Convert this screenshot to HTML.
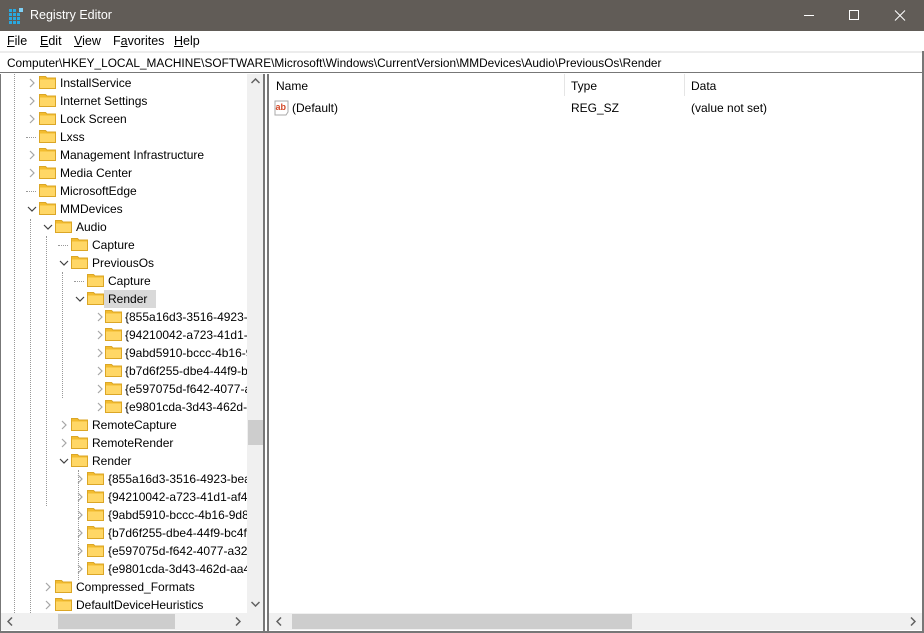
<!DOCTYPE html>
<html><head><style>
*{margin:0;padding:0;box-sizing:border-box}
body{width:924px;height:633px;overflow:hidden;background:#fff;font-family:"Liberation Sans",sans-serif;font-size:12px;color:#000;position:relative}
.title{position:absolute;left:0;top:0;width:924px;height:31px;background:#615c57;color:#fff}
.title .t{position:absolute;left:30px;top:8px;font-size:12.5px}
.menu{position:absolute;top:31px;left:0;width:924px;height:20px;background:#fff}
.menu span{position:absolute;top:3px;font-size:12.5px}
.addr{position:absolute;top:51px;left:0;width:924px;height:22px;border-top:2px solid #ececec;border-bottom:1px solid #777;background:#fff}
.addr span{position:absolute;left:7px;top:3px;font-size:11.85px;white-space:nowrap}
.tree{position:absolute;left:0;top:74px;width:263px;height:557px;overflow:hidden;border-left:1px solid #777}
.row{position:absolute;height:18px;white-space:nowrap;font-size:12px;line-height:18px}
.fold{position:absolute;width:17px;height:13px;top:2px}
.chev{position:absolute;width:10px;height:10px;top:4px}
.vs{position:absolute;left:246px;top:0;width:17px;height:539px;background:#f0f0f0}
.hs{position:absolute;left:0;top:539px;width:263px;height:17px;background:#f0f0f0}
.split{position:absolute;left:263px;top:74px;width:6px;height:559px;background:#fff;border-left:2px solid #777;border-right:2px solid #777}
.right{position:absolute;left:269px;top:74px;width:653px;height:557px}
.bb{position:absolute;left:0;top:631px;width:924px;height:2px;background:#777}
.rb{position:absolute;left:922px;top:51px;width:2px;height:582px;background:#777}
.dot{position:absolute;border-left:1px dotted #999;width:0}
.hd{position:absolute;border-top:1px dotted #999;height:0}
</style></head><body>
<div class="title">
<svg style="position:absolute;left:8px;top:8px" width="16" height="16"><g fill="#29a8e0"><rect x="1" y="5" width="3" height="3"/><rect x="5" y="5" width="3" height="3"/><rect x="9" y="5" width="3" height="3"/><rect x="1" y="9" width="3" height="3"/><rect x="5" y="9" width="3" height="3"/><rect x="9" y="9" width="3" height="3"/><rect x="1" y="13" width="3" height="3"/><rect x="5" y="13" width="3" height="3"/><rect x="9" y="13" width="3" height="3"/><rect x="1" y="1" width="3" height="3"/><rect x="5" y="1" width="3" height="3"/><rect x="11" y="0" width="4" height="4" fill="#7fd0f5"/></g></svg>
<span class="t">Registry Editor</span>
<svg style="position:absolute;left:800px;top:10px" width="110" height="12"><line x1="4" y1="5.5" x2="14" y2="5.5" stroke="#fff"/><rect x="49.5" y="0.5" width="9" height="9" fill="none" stroke="#fff"/><path d="M95 0.5L105 10.5M105 0.5L95 10.5" stroke="#fff"/></svg>
</div>
<div class="menu"><span style="left:7px"><u>F</u>ile</span><span style="left:40px"><u>E</u>dit</span><span style="left:74px"><u>V</u>iew</span><span style="left:113px">F<u>a</u>vorites</span><span style="left:174px"><u>H</u>elp</span></div>
<div class="addr"><span>Computer\HKEY_LOCAL_MACHINE\SOFTWARE\Microsoft\Windows\CurrentVersion\MMDevices\Audio\PreviousOs\Render</span></div>
<div class="tree" id="tree">
<div class="dot" style="left:13px;top:0;height:539px"></div>
<div class="dot" style="left:29px;top:145px;height:394px"></div>
<div class="dot" style="left:45px;top:162px;height:270px"></div>
<div class="dot" style="left:61px;top:198px;height:126px"></div>
<div class="dot" style="left:77px;top:396px;height:110px"></div>
<div class="vs"><svg style="position:absolute;left:4px;top:4px" width="9" height="6"><path d="M0.5 5L4.5 1L8.5 5" fill="none" stroke="#606060" stroke-width="1.5"/></svg><div style="position:absolute;left:1px;top:346px;width:15px;height:25px;background:#cdcdcd"></div><svg style="position:absolute;left:4px;top:527px" width="9" height="6"><path d="M0.5 1L4.5 5L8.5 1" fill="none" stroke="#606060" stroke-width="1.5"/></svg></div>
<div class="hs"><svg style="position:absolute;left:6px;top:4px" width="6" height="9"><path d="M5 0.5L1 4.5L5 8.5" fill="none" stroke="#606060" stroke-width="1.5"/></svg><div style="position:absolute;left:57px;top:1px;width:117px;height:15px;background:#cdcdcd"></div><svg style="position:absolute;left:234px;top:4px" width="6" height="9"><path d="M1 0.5L5 4.5L1 8.5" fill="none" stroke="#606060" stroke-width="1.5"/></svg></div>
</div>
<div class="split"></div>
<div class="right">
<div style="position:absolute;left:0;top:0;width:653px;height:22px">
<span style="position:absolute;left:7px;top:5px">Name</span>
<div style="position:absolute;left:295px;top:0;width:1px;height:22px;background:#e5e5e5"></div>
<span style="position:absolute;left:302px;top:5px">Type</span>
<div style="position:absolute;left:415px;top:0;width:1px;height:22px;background:#e5e5e5"></div>
<span style="position:absolute;left:422px;top:5px">Data</span>
</div>
<svg style="position:absolute;left:5px;top:26px" width="16" height="16"><path d="M1 1h13v11l-2 3H1z" fill="#fff" stroke="#aaa"/><text x="1.5" y="10" font-family="Liberation Sans" font-size="9" font-weight="bold" fill="#d24726">ab</text></svg>
<span style="position:absolute;left:23px;top:27px">(Default)</span>
<span style="position:absolute;left:302px;top:27px">REG_SZ</span>
<span style="position:absolute;left:422px;top:27px">(value not set)</span>
<div style="position:absolute;left:0;top:539px;width:653px;height:17px;background:#f0f0f0"><svg style="position:absolute;left:7px;top:4px" width="6" height="9"><path d="M5 0.5L1 4.5L5 8.5" fill="none" stroke="#606060" stroke-width="1.5"/></svg><div style="position:absolute;left:23px;top:1px;width:340px;height:15px;background:#cdcdcd"></div><svg style="position:absolute;left:641px;top:4px" width="6" height="9"><path d="M1 0.5L5 4.5L1 8.5" fill="none" stroke="#606060" stroke-width="1.5"/></svg></div>
</div>
<div class="rb"></div><div class="bb"></div>
<script>
var items=[[0,1,"InstallService"],[0,1,"Internet Settings"],[0,1,"Lock Screen"],[0,0,"Lxss"],[0,1,"Management Infrastructure"],[0,1,"Media Center"],[0,0,"MicrosoftEdge"],[0,2,"MMDevices"],[1,2,"Audio"],[2,0,"Capture"],[2,2,"PreviousOs"],[3,0,"Capture"],[3,2,"Render",1],[4,1,"{855a16d3-3516-4923-beat"],[4,1,"{94210042-a723-41d1-af4b"],[4,1,"{9abd5910-bccc-4b16-9d8"],[4,1,"{b7d6f255-dbe4-44f9-bc4f"],[4,1,"{e597075d-f642-4077-a321"],[4,1,"{e9801cda-3d43-462d-aa4"],[2,1,"RemoteCapture"],[2,1,"RemoteRender"],[2,2,"Render"],[3,1,"{855a16d3-3516-4923-beat"],[3,1,"{94210042-a723-41d1-af4b"],[3,1,"{9abd5910-bccc-4b16-9d8"],[3,1,"{b7d6f255-dbe4-44f9-bc4f"],[3,1,"{e597075d-f642-4077-a321"],[3,1,"{e9801cda-3d43-462d-aa4"],[1,1,"Compressed_Formats"],[1,1,"DefaultDeviceHeuristics"]];
var h="";
items.forEach(function(it,i){
var L=it[0],y=i*18,cx=26+L*16,fx=38+L*16,tx=59+L*16;
if(L==4){cx=94;fx=104;tx=124;}
h+='<div class="row" style="left:0;top:'+y+'px;width:246px">';
if(it[1]==1)h+='<svg class="chev" style="left:'+cx+'px" width="10" height="10"><path d="M3 1L7 5L3 9" fill="none" stroke="#a6a6a6" stroke-width="1.2"/></svg>';
else if(it[1]==2)h+='<svg class="chev" style="left:'+(cx)+'px" width="10" height="10"><path d="M1 3L5 7L9 3" fill="none" stroke="#404040" stroke-width="1.2"/></svg>';
else h+='<div class="hd" style="left:'+(cx-1)+'px;top:9px;width:10px"></div>';
h+='<svg class="fold" style="left:'+fx+'px" width="17" height="13"><path d="M0.5 0.5h6l1.5 1.5h8.5v10.5h-16z" fill="#f3bc2f" stroke="#dba626"/><rect x="1" y="3.5" width="15" height="8.5" fill="#ffd766"/></svg>';
if(it[3])h+='<span style="position:absolute;left:'+(tx-4)+'px;top:0;height:18px;width:'+(it[2].length*7+10)+'px;background:#d9d9d9"></span>';
h+='<span style="position:absolute;left:'+tx+'px">'+it[2]+'</span></div>';
});
document.getElementById('tree').insertAdjacentHTML('afterbegin',h);
</script>
</body></html>
